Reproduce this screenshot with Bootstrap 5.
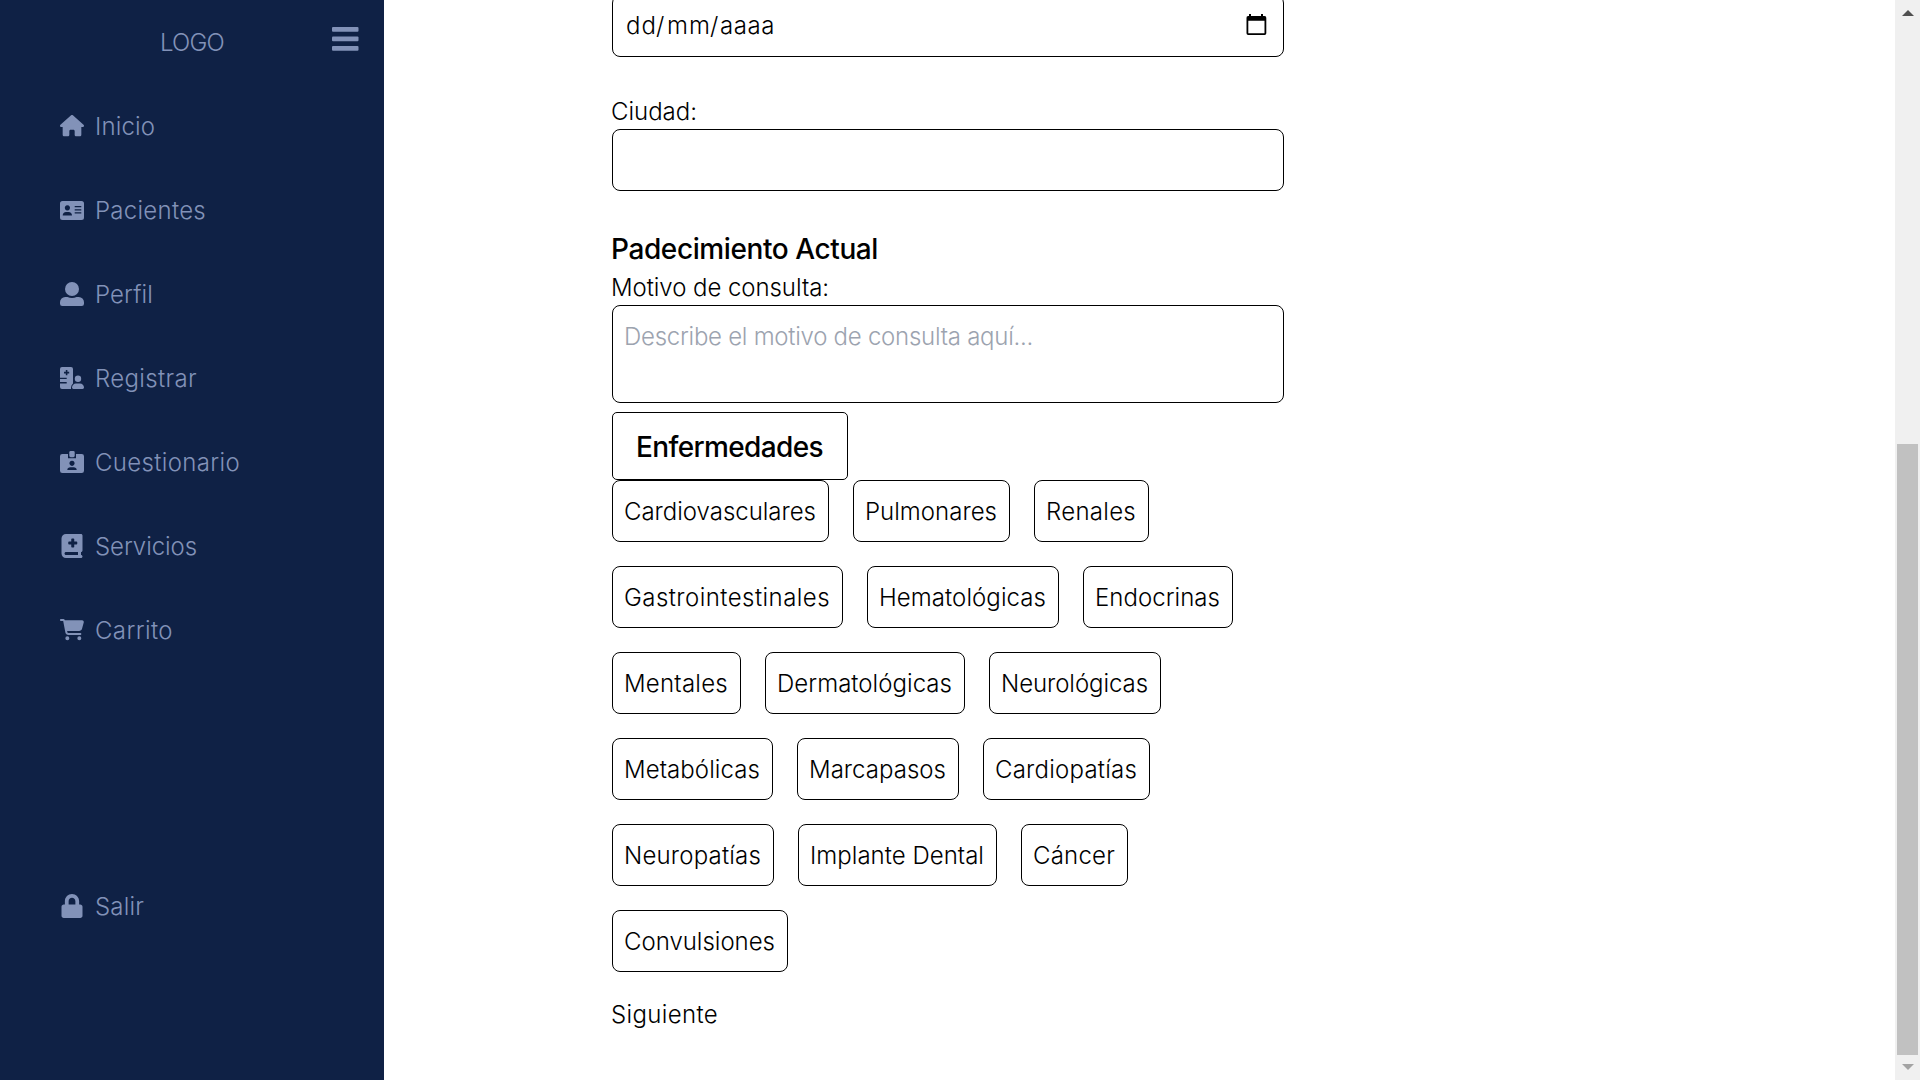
<!DOCTYPE html>
<html lang="es">
<head>
<meta charset="utf-8">
<title>Cuestionario</title>
<link href="https://cdn.jsdelivr.net/npm/bootstrap@5.3.0/dist/css/bootstrap.min.css" rel="stylesheet">
<style>
body{font-family:Inter,"Open Sans",sans-serif;font-size:24px;font-weight:300;line-height:36px;color:#000;background:#fff}
.side-panel{width:384px;background:#0f2145;color:#8292b8}
.side-head{height:84px}
.brand-name{padding-left:161px;margin:1px 0 -1px}
.menu-toggle{padding:0 25px 6px 0}
.side-panel .nav-link{height:84px;padding:0 60px;gap:12px;color:inherit}
.side-panel .nav-link span{margin-top:1px;margin-bottom:-1px}
.side-panel svg{fill:currentColor}
.glyph{width:24px}
.side-exit{margin-bottom:132px}
.form-column{width:672px;margin-left:228px;padding-bottom:48px}
.field-box{min-height:62px;padding:13px 12px 11px;border:1px solid #000;border-radius:8px}
.date-box{padding:12px 15px 12px 14px}
.date-box svg{margin-top:-2px}
.field-gap{margin-bottom:36px}
.line-text{padding-top:1px;margin-bottom:-1px}
.area-box{height:98px;margin-bottom:9px;color:#9ca3af}
.form-column h2{font-size:28px;line-height:42px;font-weight:500;padding-top:1px;margin-bottom:-1px}
.section-button{width:236px;height:68px;padding:13px 0 11px;border:1px solid #000;border-radius:5px;font-size:28px;line-height:42px;font-weight:550}
.chip-list{gap:24px}
.chip-row{gap:24px}
.chip{padding:13px 12px 11px;border:1px solid #000;border-radius:8px}
[data-w]{display:inline-block;white-space:nowrap;margin-left:-1px}
.scroll-track{width:25px;background:#f0f0f0;padding:10px 0}
.scroll-thumb{width:21px;height:611px;background:#c1c1c1;margin-bottom:9px}
</style>
<script src="https://cdn.jsdelivr.net/npm/bootstrap@5.3.0/dist/js/bootstrap.bundle.min.js"></script>
</head>
<body class="d-flex vh-100 overflow-hidden">
<aside class="side-panel d-flex flex-column flex-shrink-0">
  <div class="side-head d-flex align-items-center justify-content-between">
    <span class="brand-name"><span data-w="64">LOGO</span></span>
    <span class="menu-toggle d-flex"><svg width="27" height="24" viewBox="0 0 27 24"><rect width="26.5" height="4.8" rx="1"/><rect y="9.6" width="26.5" height="4.6" rx="1"/><rect y="19" width="26.5" height="4.8" rx="1"/></svg></span>
  </div>
  <nav class="nav flex-column flex-grow-1">
    <a class="nav-link d-flex align-items-center"><svg class="glyph" viewBox="0 0 576 512"><path d="M575.8 255.5c0 18-15 32.1-32 32.1h-32l.7 160.2c0 2.7-.2 5.4-.5 8.1V472c0 22.1-17.9 40-40 40H392c-22.1 0-40-17.9-40-40V384c0-17.7-14.3-32-32-32H256c-17.7 0-32 14.3-32 32v88c0 22.1-17.9 40-40 40H104c-22.1 0-40-17.9-40-40V287.6H32c-18 0-32-14-32-32.1c0-9 3-17 10-24L266.4 8c7-7 15-8 22-8s15 2 21 7L564.8 231.5c8 7 12 15 11 24z"/></svg><span data-w="60">Inicio</span></a>
    <a class="nav-link d-flex align-items-center"><svg class="glyph" viewBox="0 0 24 19"><path fill-rule="evenodd" d="M2.5 0h19A2.5 2.5 0 0 1 24 2.5v14a2.5 2.5 0 0 1-2.5 2.5h-19A2.5 2.5 0 0 1 0 16.500v-14A2.500 2.500 0 0 1 2.500 0zM7.400 4.300a2.600 2.600 0 1 0 .01 0zM2.700 14.500h9.300c0-2-1.500-3.500-3.300-3.500H6c-1.800 0-3.300 1.500-3.300 3.500zM14.700 5h6.600v1.300h-6.600zm0 3.200h6.600v1.300h-6.600zm0 3.100h6.600v1.300h-6.600z"/></svg><span data-w="111">Pacientes</span></a>
    <a class="nav-link d-flex align-items-center"><svg class="glyph" viewBox="0 0 24 24"><circle cx="12" cy="7" r="7"/><path d="M5.200 15h2.300c2.800 1.300 6.200 1.300 9 0h2.300A5.200 5.200 0 0 1 24 20.200v1.500a2.300 2.300 0 0 1-2.300 2.300H2.300A2.300 2.300 0 0 1 0 21.700v-1.500A5.200 5.200 0 0 1 5.200 15z"/></svg><span data-w="58">Perfil</span></a>
    <a class="nav-link d-flex align-items-center"><svg class="glyph" viewBox="0 0 24 22"><path fill-rule="evenodd" d="M2 0h9a2 2 0 0 1 2 2v14.500A5.500 5.500 0 0 0 11 20.800V22H2a2 2 0 0 1-2-2v-3.600h6.700v-1.300H0v-3h6.700v-1.300H0V2a2 2 0 0 1 2-2zM5.800 3v1.800H4v1.600h1.800v1.800h1.600V6.400h1.800V4.800H7.400V3z"/><circle cx="18" cy="11.700" r="3.200"/><path d="M16 16.600h4c2.200 0 4 1.800 4 4 0 .8-.6 1.400-1.400 1.400h-9.200c-.8 0-1.400-.6-1.400-1.400 0-2.200 1.800-4 4-4z"/></svg><span data-w="102">Registrar</span></a>
    <a class="nav-link d-flex align-items-center"><svg class="glyph" viewBox="0 0 24 22"><path fill-rule="evenodd" d="M2.300 3H8v4.300h8V3h5.700A2.300 2.300 0 0 1 24 5.300v14.400a2.300 2.300 0 0 1-2.300 2.300H2.300A2.300 2.300 0 0 1 0 19.700V5.300A2.300 2.300 0 0 1 2.300 3zM12 9.700a2.600 2.600 0 1 0 .01 0zM7.300 19h9.400c0-1.600-1.300-2.700-3-2.700h-3.400c-1.700 0-3 1.100-3 2.700z"/><rect x="9.300" width="5.400" height="6.200" rx="1.400"/></svg><span data-w="145">Cuestionario</span></a>
    <a class="nav-link d-flex align-items-center"><svg class="glyph" height="24" viewBox="0 0 448 512"><path fill-rule="evenodd" d="M0 96C0 43 43 0 96 0H416c17.700 0 32 14.300 32 32V352c0 17.700-14.300 32-32 32v64c17.700 0 32 14.300 32 32s-14.300 32-32 32H96c-53 0-96-43-96-96V96zM64 416c0 17.700 14.300 32 32 32H352V384H96c-17.700 0-32 14.300-32 32zM208 112v48H160c-8.800 0-16 7.200-16 16v32c0 8.800 7.200 16 16 16h48v48c0 8.800 7.200 16 16 16h32c8.800 0 16-7.200 16-16V224h48c8.800 0 16-7.200 16-16V176c0-8.800-7.200-16-16-16H272V112c0-8.800-7.200-16-16-16H224c-8.800 0-16 7.200-16 16z"/></svg><span data-w="102">Servicios</span></a>
    <a class="nav-link d-flex align-items-center"><svg class="glyph" viewBox="0 0 576 512"><path d="M0 24C0 10.700 10.700 0 24 0H69.500c22 0 41.500 12.800 50.600 32h411c26.300 0 45.500 25 38.600 50.400l-41 152.300c-8.500 31.400-37 53.300-69.500 53.300H170.700l5.400 28.500c2.200 11.300 12.100 19.500 23.600 19.500H488c13.300 0 24 10.700 24 24s-10.700 24-24 24H199.700c-34.600 0-64.300-24.600-70.700-58.500L77.400 54.500c-.7-3.800-4-6.500-7.900-6.500H24C10.700 48 0 37.300 0 24zM128 464a48 48 0 1 1 96 0 48 48 0 1 1-96 0zm336-48a48 48 0 1 1 0 96 48 48 0 1 1 0-96z"/></svg><span data-w="78">Carrito</span></a>
  </nav>
  <nav class="nav flex-column side-exit">
    <a class="nav-link d-flex align-items-center"><svg class="glyph" height="24" viewBox="0 0 448 512"><path d="M400 224h-24v-72C376 68.200 307.800 0 224 0S72 68.200 72 152v72H48c-26.500 0-48 21.500-48 48v192c0 26.500 21.500 48 48 48h352c26.500 0 48-21.500 48-48V272c0-26.500-21.500-48-48-48zm-104 0H152v-72c0-39.700 32.300-72 72-72s72 32.300 72 72v72z"/></svg><span data-w="49">Salir</span></a>
  </nav>
</aside>
<main class="flex-grow-1 d-flex flex-column justify-content-end vh-100 overflow-hidden">
  <form class="form-column">
    <div class="field-box date-box field-gap d-flex align-items-center justify-content-between">
      <span class="d-flex"><span data-w="31">dd</span><span data-w="12" class="text-center">/</span><span data-w="44">mm</span><span data-w="11" class="text-center">/</span><span data-w="55">aaaa</span></span>
      <svg width="22" height="22" viewBox="0 0 22 22"><path d="M3 0h2v2h10V0h2v2h1.500A1.800 1.800 0 0 1 20.300 4v15.300a1.700 1.700 0 0 1-1.700 1.700H2.200A1.700 1.700 0 0 1 .5 19.300V4a1.800 1.800 0 0 1 1.700-2H3zm-.7 6.700v12.500h16.200V6.700z" fill-rule="evenodd"/></svg>
    </div>
    <div class="line-text d-flex"><label data-w="86">Ciudad:</label></div>
    <div class="field-box field-gap"></div>
    <h2 class="mt-0"><span data-w="267">Padecimiento Actual</span></h2>
    <div class="line-text d-flex"><label data-w="218">Motivo de consulta:</label></div>
    <div class="field-box area-box"><span data-w="409">Describe el motivo de consulta aquí...</span></div>
    <div class="section-button text-center"><span data-w="187">Enfermedades</span></div>
    <div class="chip-list d-flex flex-column">
      <div class="chip-row d-flex"><div class="chip"><span data-w="192">Cardiovasculares</span></div><div class="chip"><span data-w="132">Pulmonares</span></div><div class="chip"><span data-w="90">Renales</span></div></div>
      <div class="chip-row d-flex"><div class="chip"><span data-w="206">Gastrointestinales</span></div><div class="chip"><span data-w="167">Hematológicas</span></div><div class="chip"><span data-w="125">Endocrinas</span></div></div>
      <div class="chip-row d-flex"><div class="chip"><span data-w="104">Mentales</span></div><div class="chip"><span data-w="175">Dermatológicas</span></div><div class="chip"><span data-w="147">Neurológicas</span></div></div>
      <div class="chip-row d-flex"><div class="chip"><span data-w="136">Metabólicas</span></div><div class="chip"><span data-w="137">Marcapasos</span></div><div class="chip"><span data-w="142">Cardiopatías</span></div></div>
      <div class="chip-row d-flex"><div class="chip"><span data-w="137">Neuropatías</span></div><div class="chip"><span data-w="174">Implante Dental</span></div><div class="chip"><span data-w="82">Cáncer</span></div></div>
      <div class="chip-row d-flex"><div class="chip"><span data-w="151">Convulsiones</span></div></div>
      <div class="line-text d-flex"><span data-w="107">Siguiente</span></div>
    </div>
  </form>
</main>
<div class="scroll-track d-flex flex-column align-items-center justify-content-between flex-shrink-0">
  <svg width="12" height="6" viewBox="0 0 12 6"><path d="M0 6L6 0l6 6z" fill="#505050"/></svg>
  <div class="d-flex flex-column align-items-center">
    <div class="scroll-thumb"></div>
    <svg width="12" height="6" viewBox="0 0 12 6"><path d="M0 0h12L6 6z" fill="#a3a3a3"/></svg>
  </div>
</div>
<script>
// Track each label so that it takes exactly the width given in data-w
document.querySelectorAll('[data-w]').forEach(function (el) {
  var natural = el.getBoundingClientRect().width;
  el.style.letterSpacing = ((+el.dataset.w - natural) / el.textContent.length) + 'px';
  el.style.width = el.dataset.w + 'px';
});
</script>
</body>
</html>
